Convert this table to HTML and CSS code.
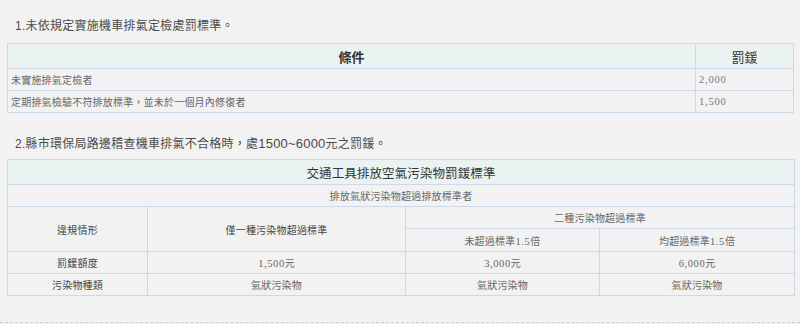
FILE: index.html
```html
<!DOCTYPE html>
<html lang="zh-Hant">
<head>
<meta charset="utf-8">
<title>機車排氣罰鍰標準</title>
<link rel="stylesheet" href="styles.css">
</head>
<body>
<div class="page">
  <p class="lead lead-first">1.未依規定實施機車排氣定檢處罰標準。</p>
  <table class="grid fine-table">
    <colgroup><col class="c-cond"><col class="c-fine"></colgroup>
    <tr class="head-row"><th class="th-cond">條件</th><th class="th-fine">罰鍰</th></tr>
    <tr class="row"><td>未實施排氣定檢者</td><td class="num">2,000</td></tr>
    <tr class="row"><td>定期排氣檢驗不符排放標準，並未於一個月內修復者</td><td class="num">1,500</td></tr>
  </table>

  <p class="lead lead-second">2.縣市環保局路邊稽查機車排氣不合格時，處<span class="digits">1500~6000</span>元之罰鍰。</p>
  <table class="grid std-table">
    <colgroup><col class="k1"><col class="k2"><col class="k3"><col class="k4"></colgroup>
    <tr class="head-row"><th colspan="4" class="caption-cell">交通工具排放空氣污染物罰鍰標準</th></tr>
    <tr class="row"><td colspan="4" class="sub">排放氣狀污染物超過排放標準者</td></tr>
    <tr class="row"><td rowspan="2" class="label">違規情形</td><td rowspan="2" class="label">僅一種污染物超過標準</td><td colspan="2" class="sub">二種污染物超過標準</td></tr>
    <tr class="row row-tall"><td class="sub">未超過標準<span class="num-inline">1.5</span>倍</td><td class="sub">均超過標準<span class="num-inline">1.5</span>倍</td></tr>
    <tr class="row"><td class="label">罰鍰額度</td><td class="amt"><span class="num-inline">1,500</span>元</td><td class="amt"><span class="num-inline">3,000</span>元</td><td class="amt"><span class="num-inline">6,000</span>元</td></tr>
    <tr class="row"><td class="label">污染物種類</td><td class="sub">氣狀污染物</td><td class="sub">氣狀污染物</td><td class="sub">氣狀污染物</td></tr>
  </table>
</div>
<div class="rule"></div>
</body>
</html>
```
FILE: styles.css
```css
html, body {
  margin: 0;
  padding: 0;
  background: #f2f2f2;
}
body {
  font-family: "Noto Sans CJK TC", "Noto Sans", sans-serif;
  color: #555;
}
.page {
  padding: 16px 6px 0 7px;
  height: 306px;
  box-sizing: border-box;
}
.lead {
  margin: 0;
  padding-left: 8px;
  font-family: "Liberation Sans", "Noto Sans CJK TC", sans-serif;
  font-size: 12px;
  line-height: 20px;
  color: #4a4a4a;
  letter-spacing: 0.25px;
}
.digits {
  font-family: "Liberation Sans", sans-serif;
  font-size: 13px;
  letter-spacing: 0.2px;
}
.lead-first { margin-bottom: 7px; }
.lead-second { margin-top: 21px; margin-bottom: 5px; }

.grid {
  width: 787px;
  border-collapse: collapse;
  table-layout: fixed;
}
.grid th, .grid td {
  border: 1px solid #cbd9ea;
  padding: 0 3px;
  box-sizing: border-box;
  vertical-align: middle;
}
.head-row { height: 25px; }
.head-row th {
  background: #eaf3f2;
  font-weight: normal;
  color: #333;
}
.row { height: 22px; }
.row-tall { height: 23px; }

.c-fine { width: 98px; }
.th-cond, .th-fine {
  font-family: "Liberation Serif", "Noto Sans CJK TC", serif;
  font-size: 13px;
}
.th-cond { font-weight: bold !important; }
.fine-table td {
  font-size: 10px;
  color: #666;
  letter-spacing: 0.2px;
}
.fine-table td.num {
  font-family: "Liberation Serif", serif;
  font-size: 10.5px;
  letter-spacing: 0.8px;
  color: #777;
}

.k1 { width: 140px; }
.k2 { width: 258px; }
.k3 { width: 194px; }
.k4 { width: 195px; }
.std-table td { text-align: center; }
.caption-cell {
  font-size: 12.5px;
  letter-spacing: 0.1px;
}
.std-table .sub {
  font-size: 10px;
  color: #666;
  letter-spacing: 0.2px;
}
.std-table .label {
  font-size: 10px;
  color: #444;
  letter-spacing: 0.2px;
}
.std-table .amt {
  font-size: 10px;
  color: #666;
}
.num-inline {
  font-family: "Liberation Serif", serif;
  font-size: 10.5px;
  letter-spacing: 0.6px;
}
.rule {
  border-top: 1px dashed #cfcfcf;
  margin-top: 16px;
}
```
